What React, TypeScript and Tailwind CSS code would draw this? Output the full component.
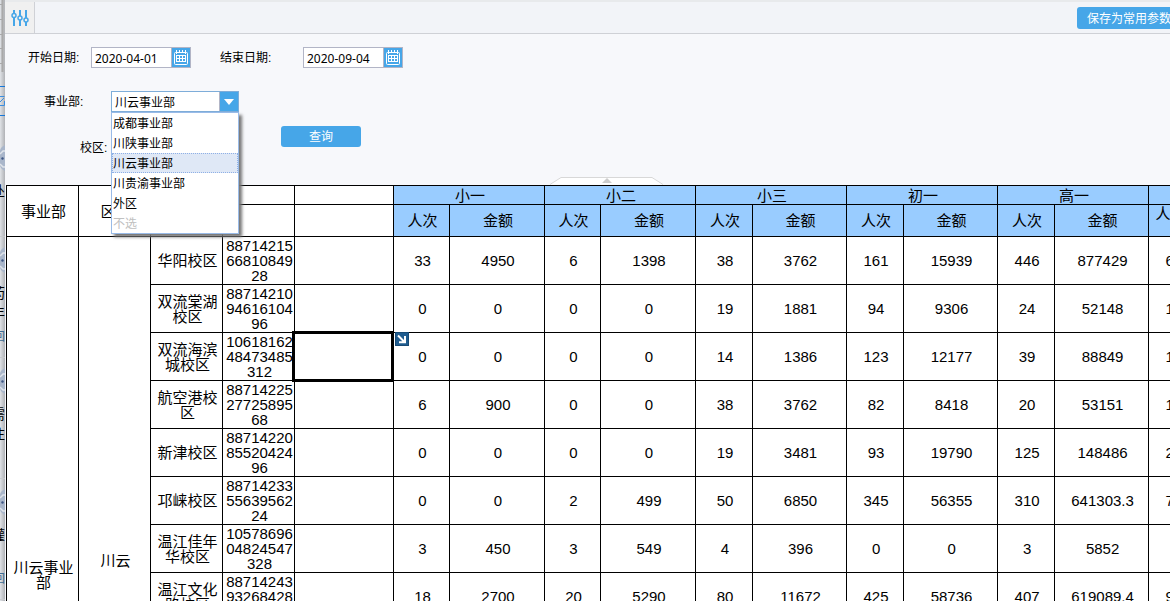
import React, { useState } from 'react';

interface Campus {
  name: string;
  code: string;
  values: string[];
}

const departments = ['成都事业部', '川陕事业部', '川云事业部', '川贵渝事业部', '外区'];

const grades = ['小一', '小二', '小三', '初一', '高一'];

const columnWidths = [
  'w-[72px]', 'w-[72px]', 'w-[72px]', 'w-[72px]', 'w-[99px]',
  'w-[56px]', 'w-[95px]', 'w-[56px]', 'w-[95px]', 'w-[57px]', 'w-[94px]',
  'w-[57px]', 'w-[94px]', 'w-[57px]', 'w-[94px]', 'w-[57px]',
];

const campuses: Campus[] = [
  { name: '华阳校区', code: '887142156681084928', values: ['33', '4950', '6', '1398', '38', '3762', '161', '15939', '446', '877429', '684'] },
  { name: '双流棠湖校区', code: '887142109461610496', values: ['0', '0', '0', '0', '19', '1881', '94', '9306', '24', '52148', '137'] },
  { name: '双流海滨城校区', code: '1061816248473485312', values: ['0', '0', '0', '0', '14', '1386', '123', '12177', '39', '88849', '176'] },
  { name: '航空港校区', code: '887142252772589568', values: ['6', '900', '0', '0', '38', '3762', '82', '8418', '20', '53151', '146'] },
  { name: '新津校区', code: '887142208552042496', values: ['0', '0', '0', '0', '19', '3481', '93', '19790', '125', '148486', '237'] },
  { name: '邛崃校区', code: '887142335563956224', values: ['0', '0', '2', '499', '50', '6850', '345', '56355', '310', '641303.3', '707'] },
  { name: '温江佳年华校区', code: '1057869604824547328', values: ['3', '450', '3', '549', '4', '396', '0', '0', '3', '5852', '13'] },
  { name: '温江文化路校区', code: '887142439326842880', values: ['18', '2700', '20', '5290', '80', '11672', '425', '58736', '407', '619089.4', '950'] },
];

// rows under the fold: five campuses, the region subtotal and the department total
const restHeights = ['h-12', 'h-12', 'h-12', 'h-12', 'h-12', 'h-6', 'h-7'];

const comments = [
  { lines: ['处'], reply: '', padding: 'pt-[29px]' },
  { lines: ['药', '年'], reply: '回', padding: 'pt-[10px]' },
  { lines: ['需', '注'], reply: '', padding: 'pt-[10px]' },
  { lines: ['灌'], reply: '回', padding: 'pt-[10px]' },
];

const cell = 'border-r border-b border-black p-0 pl-[2px] text-center align-middle font-normal';

const SlidersIcon: React.FC = () => (
  <svg width="18" height="18" viewBox="0 0 18 18" fill="none" stroke="#46a6e8">
    <path d="M3 1v4M3 9v8M9 1v6M9 11v6M15 1v8M15 13v4" strokeWidth="2" />
    <g strokeWidth="1.500" fill="#f0f0f0">
      <circle cx="3" cy="6.500" r="2" />
      <circle cx="9" cy="9" r="2" />
      <circle cx="15" cy="11" r="2" />
    </g>
  </svg>
);

const CalendarIcon: React.FC = () => (
  <svg width="14" height="15" viewBox="0 0 14 15" fill="none" stroke="#fff">
    <rect x=".5" y="2.500" width="13" height="12" rx="1" />
    <path d="M2.500 0v4M5.500 0v2M8.500 0v2M11.500 0v4" />
    <path d="M2 5.500h10M2 8.500h10M2 11.500h10M2.500 5v7M5.500 5v7M8.500 5v7M11.500 5v7" />
  </svg>
);

const AvatarSlice: React.FC = () => (
  <svg width="5" height="26" viewBox="0 0 5 26" className="block shrink-0">
    <path d="M5 0C3 1 0 3 0 6v14c0 3 3 5 5 6z" fill="#a9b6ca" />
    <path d="M0 9l3-3h2M0 19l3 3h2" stroke="#dfe4ea" strokeWidth="1.500" fill="none" />
    <circle cx="2.500" cy="13.500" r="1.200" fill="#3d5684" />
  </svg>
);

const DateField: React.FC<{ id: string; label: string; labelClass: string; value: string }> = ({ id, label, labelClass, value }) => {
  const [date, setDate] = useState(value);
  return (
    <div className="flex items-center">
      <label htmlFor={id} className={labelClass}>{label}</label>
      <div className="flex h-[21px] w-[100px] border border-[#b2b5c6] bg-white">
        <input
          id={id}
          type="text"
          value={date}
          onChange={e => setDate(e.target.value)}
          className="min-w-0 flex-1 bg-white pt-[2px] pl-[3px] font-['Noto_Sans','Noto_Sans_CJK_SC',sans-serif] outline-none"
        />
        <button type="button" aria-label="选择日期" className="flex w-[19px] items-center justify-center border-l border-[#b2b5c6] bg-[#46a6e8]">
          <CalendarIcon />
        </button>
      </div>
    </div>
  );
};

const DepartmentSelect: React.FC = () => {
  const [value, setValue] = useState('川云事业部');
  return (
    <div className="flex items-center">
      <label htmlFor="department" className="w-[67px]">事业部:</label>
      <div className="relative w-[128px]">
        <div className="flex h-[21px] border border-[#7eadd9] bg-white">
          <select
            id="department"
            value={value}
            onChange={e => setValue(e.target.value)}
            className="min-w-0 flex-1 appearance-none bg-white pt-[2px] pl-[3px] outline-none"
          >
            {departments.map(name => <option key={name}>{name}</option>)}
          </select>
          <span className="flex w-[19px] items-center justify-center border-l border-[#b2b5c6] bg-[#46a6e8]">
            <svg width="10" height="6" viewBox="0 0 10 6"><path d="M0 0h10L5 6z" fill="#fff" /></svg>
          </span>
        </div>
        <ul role="listbox" aria-label="事业部" className="absolute top-full left-0 z-20 w-full border border-[#99bbe8] bg-white shadow-[3px_3px_3px_#777]">
          {departments.map(name => (
            <li
              key={name}
              role="option"
              aria-selected={name === value}
              onClick={() => setValue(name)}
              className={name === value
                ? 'h-5 border border-dotted border-[#8fb0e6] bg-[#dfe8f6] pt-px leading-[18px]'
                : 'h-5 px-px pt-px leading-5'}
            >
              {name}
            </li>
          ))}
          <li role="option" aria-selected={false} className="h-5 px-px pt-px leading-5 text-[#c0c0c0]">不选</li>
        </ul>
      </div>
    </div>
  );
};

const PageEdge: React.FC = () => (
  <aside className="flex w-[5px] shrink-0 flex-col overflow-hidden bg-linear-to-r from-[#e0e3e7] to-[#b0b2b6] text-sm text-black">
    <div className="h-[86px] shrink-0">
      <svg width="5" height="72" viewBox="0 0 5 72" stroke="#a9a9a9">
        <path d="M2.500 0v72" strokeWidth="2" />
        <path d="M0 4.500h2M0 19.500h2M0 34.500h2M0 48.500h2M0 63.500h2" />
      </svg>
    </div>
    <div className="flex h-[30px] shrink-0 items-center border-y border-[#1677d9]">
      <svg width="5" height="10" viewBox="0 0 5 10" fill="none" stroke="#3b8ee0">
        <path d="M0 .5h4.500M0 9.500h4.500V5M0 6l4-4" />
      </svg>
    </div>
    {comments.map((comment, i) => (
      <div key={i} className={`flex h-[121px] shrink-0 flex-col items-end border-b border-[#c8cacd] ${comment.padding}`}>
        <AvatarSlice />
        <div className="mt-[10px] h-[46px] leading-[20px]">
          {comment.lines.map(line => <div key={line}>{line}</div>)}
        </div>
        <div className="text-xs text-[#3f6c91]">{comment.reply}</div>
      </div>
    ))}
  </aside>
);

const ReportTable: React.FC = () => (
  <table className="w-[1200px] table-fixed border-separate border-spacing-0 border-t border-l border-black bg-white text-[15px] leading-[15px]">
    <colgroup>
      {columnWidths.map((width, i) => <col key={i} className={width} />)}
    </colgroup>
    <thead>
      <tr className="h-[19px]">
        <th rowSpan={2} className={cell}>事业部</th>
        <th rowSpan={2} className={cell}>区域</th>
        <th className={cell} />
        <th className={cell} />
        <th className={cell} />
        {grades.map(grade => (
          <th key={grade} colSpan={2} className={`${cell} bg-[#99ccff]`}>{grade}</th>
        ))}
        <th className={`${cell} bg-[#99ccff]`} />
      </tr>
      <tr className="h-8">
        <th className={cell} />
        <th className={cell} />
        <th className={cell} />
        {grades.map(grade => (
          <React.Fragment key={grade}>
            <th className={`${cell} bg-[#99ccff]`}>人次</th>
            <th className={`${cell} bg-[#99ccff]`}>金额</th>
          </React.Fragment>
        ))}
        <th className={`${cell} bg-[#99ccff]`}>人次合计</th>
      </tr>
    </thead>
    <tbody>
      {campuses.map((campus, row) => (
        <tr key={campus.code} className="h-12">
          {row === 0 && <td rowSpan={15} className={cell}>川云事业部</td>}
          {row === 0 && <td rowSpan={14} className={cell}>川云</td>}
          <td className={cell}>{campus.name}</td>
          <td className={`${cell} break-all`}>{campus.code}</td>
          <td className={`${cell} relative`}>
            {row === 2 && (
              <>
                <span className="absolute -top-[2px] -right-px -bottom-[2px] -left-[3px] z-10 border-[3px] border-black" />
                <span className="absolute -top-px left-full z-10 ml-[2px] bg-white">
                  <svg width="14" height="14" viewBox="0 0 14 14" className="block">
                    <rect x=".5" y=".5" width="13" height="13" fill="#1f5c8f" stroke="#174a75" />
                    <path d="M3 3.500l6 6M10 4v6.200H4" fill="none" stroke="#fff" strokeWidth="2" />
                  </svg>
                </span>
              </>
            )}
          </td>
          {campus.values.map((value, i) => <td key={i} className={cell}>{value}</td>)}
        </tr>
      ))}
      {restHeights.map((height, i) => (
        <tr key={i} className={height}>
          <td colSpan={i === 6 ? 4 : 3} className={cell} />
          {campuses[0].values.map((_, j) => <td key={j} className={cell} />)}
        </tr>
      ))}
    </tbody>
  </table>
);

export default function App() {
  return (
    <div className="flex h-screen w-full overflow-hidden bg-[#f7f8fb] font-['Liberation_Sans','Noto_Sans_CJK_SC',sans-serif] text-xs text-black">
      <PageEdge />
      <main className="min-w-0 flex-1 overflow-hidden">
        {/* the report is a little wider than the window */}
        <div className="w-[calc(100%+39px)]">
          <header className="flex h-[34px] items-stretch border-b border-[#cfd1d6] bg-[#f2f4f8]">
            <div className="flex flex-1 border-t-2 border-[#e8eaec]">
              <button type="button" aria-label="参数" className="flex w-[30px] items-center justify-center border-r border-[#cfd1d6] bg-[#f0f0f0]">
                <SlidersIcon />
              </button>
              <button type="button" className="mt-[5px] mr-7 ml-auto h-[22px] rounded-[3px] bg-[#46a6e8] px-[10px] pt-[2px] text-white">
                保存为常用参数
              </button>
            </div>
          </header>

          <form className="pt-[13px]" onSubmit={e => e.preventDefault()}>
            <div className="flex gap-[29px] pl-[23px]">
              <DateField id="start" label="开始日期:" labelClass="w-[63px]" value="2020-04-01" />
              <DateField id="end" label="结束日期:" labelClass="w-[83px]" value="2020-09-04" />
            </div>
            <div className="mt-[23px] pl-[39px]">
              <DepartmentSelect />
            </div>
            <div className="mt-[14px] flex items-start pl-[75px]">
              <div className="mt-[11px] flex h-[21px] items-center">
                <label htmlFor="campus" className="w-[31px]">校区:</label>
                <input id="campus" type="text" className="h-[21px] w-[128px] border border-[#b2b5c6] bg-white" />
              </div>
              <button type="submit" className="ml-[42px] h-[21px] w-20 rounded-[3px] bg-[#46a6e8] text-white">查询</button>
            </div>
          </form>

          <button type="button" aria-label="收起" className="mx-auto mt-[19px] block">
            <svg width="114" height="8" viewBox="0 0 114 8" className="block">
              <path d="M0 7.500L11 .5h91l11 7" fill="#fff" stroke="#d8d8d8" />
              <path d="M52 6l5-5 5 5z" fill="#ccc" />
            </svg>
          </button>

          <div className="pl-px">
            <ReportTable />
          </div>
        </div>
      </main>
    </div>
  );
}
